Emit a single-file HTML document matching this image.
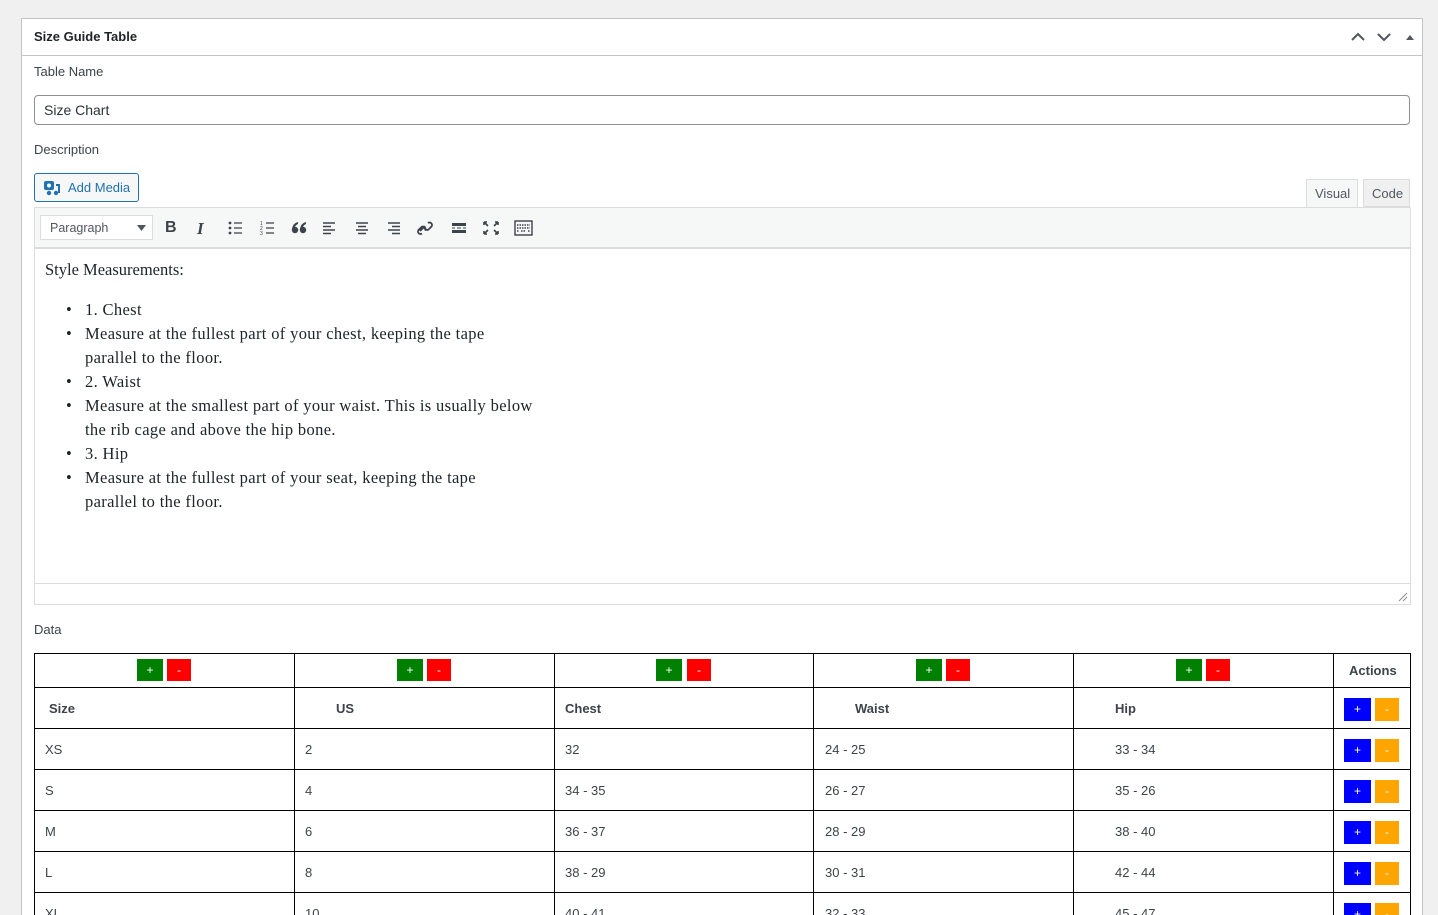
<!DOCTYPE html>
<html style="width:1438px;height:915px;overflow:hidden"><head><meta charset="utf-8"><style>
*{box-sizing:border-box;margin:0;padding:0}
body{width:1438px;height:915px;background:#f0f0f1;font-family:"Liberation Sans",sans-serif;font-size:13px;color:#1d2327;position:relative;overflow:hidden}
.a{position:absolute}
.panel{left:21px;top:18px;width:1402px;height:920px;background:#fff;border:1px solid #c3c4c7}
.t{position:absolute;color:#3c434a;font-size:13px;white-space:nowrap}
.b{position:absolute;width:26px;height:22px;color:#fff;font-size:12px;text-align:center;line-height:22px}
.g{background:#008000}.r{background:#ff0000}.bl{background:#0000ff}.o{background:#ffa500}
.hl{position:absolute;left:34px;width:1377px;height:1px;background:#000}
.vl{position:absolute;top:653px;width:1px;height:262px;background:#000}
.serif{font-family:"Liberation Serif",serif;font-size:16.5px;color:#1d2327;position:absolute;white-space:nowrap}
</style></head><body>
<div class="a panel"></div>
<div class="a" style="left:22px;top:55px;width:1400px;height:1px;background:#c3c4c7"></div>
<div class="t" style="left:34px;top:29px;font-weight:bold;color:#1d2327;font-size:13px">Size Guide Table</div>
<svg class="a" style="left:1349px;top:30px" width="70" height="14"><path d="M3 10 L9 4 L15 10" stroke="#50575e" stroke-width="2" fill="none"/><path d="M29 4 L35 10 L41 4" stroke="#50575e" stroke-width="2" fill="none"/><path d="M57 10 L61 5 L65 10Z" fill="#50575e"/></svg>
<div class="t" style="left:34px;top:64px">Table Name</div>
<div class="a" style="left:34px;top:95px;width:1376px;height:30px;border:1px solid #8c8f94;border-radius:4px"></div>
<div class="t" style="left:44px;top:102px;color:#2c3338;font-size:14px">Size Chart</div>
<div class="t" style="left:34px;top:142px">Description</div>
<div class="a" style="left:34px;top:173px;width:105px;height:29px;border:1px solid #2271b1;border-radius:3px;background:#f6f7f7"></div>
<svg class="a" style="left:43px;top:180px" width="18" height="16"><rect x="1" y="1" width="10" height="9" rx="2" fill="#2271b1"/><circle cx="6" cy="5.5" r="2" fill="#fff"/><path d="M13 5 h3 v8" stroke="#2271b1" stroke-width="2" fill="none"/><circle cx="13" cy="13" r="2.2" fill="#2271b1"/><circle cx="6" cy="13" r="2.2" fill="#2271b1"/></svg>
<div class="t" style="left:68px;top:180px;color:#2271b1">Add Media</div>
<div class="a" style="left:1306px;top:179px;width:52px;height:29px;background:#f6f7f7;border:1px solid #dcdcde;border-bottom:none"></div>
<div class="t" style="left:1315px;top:186px;color:#50575e">Visual</div>
<div class="a" style="left:1363px;top:179px;width:47px;height:28px;background:#f0f0f1;border:1px solid #dcdcde"></div>
<div class="t" style="left:1372px;top:186px;color:#50575e">Code</div>
<div class="a" style="left:34px;top:207px;width:1377px;height:398px;border:1px solid #dcdcde"></div>
<div class="a" style="left:35px;top:208px;width:1375px;height:41px;background:#f6f7f7;border-bottom:2px solid #dcdcde"></div>
<div class="a" style="left:40px;top:215px;width:113px;height:25px;background:#fff;border:1px solid #dcdcde"></div>
<div class="t" style="left:50px;top:221px;font-size:12.5px;color:#50575e">Paragraph</div>
<svg class="a" style="left:137px;top:225px" width="10" height="6"><path d="M0 0 L9 0 L4.5 6Z" fill="#50575e"/></svg>
<div class="t" style="left:165px;top:219px;font-weight:bold;font-size:16px;color:#3c434a">B</div>
<div class="t" style="left:197px;top:219px;font-style:italic;font-family:'Liberation Serif',serif;font-weight:bold;font-size:17px;color:#3c434a">I</div>
<svg class="a" style="left:226px;top:219px" width="320" height="18" fill="#3c434a" stroke="#3c434a">
<g stroke="none"><circle cx="4" cy="4" r="1.4"/><circle cx="4" cy="9" r="1.4"/><circle cx="4" cy="14" r="1.4"/></g>
<path d="M8 4h8M8 9h8M8 14h8" stroke-width="1.2"/>
<g stroke="none" font-size="5" font-family="Liberation Sans"><text x="34" y="6">1</text><text x="34" y="11">2</text><text x="34" y="16">3</text></g>
<path d="M40 4h8M40 9h8M40 14h8" stroke-width="1.2"/>
<g stroke="none"><circle cx="69" cy="11" r="3.2"/><circle cx="77" cy="11" r="3.2"/><path d="M66 10 q1-6 6-7 v2 q-3 1-3.5 5z M74 10 q1-6 6-7 v2 q-3 1-3.5 5z"/></g>
<path d="M97 4h12M97 7.5h8M97 11h12M97 14.5h8" stroke-width="1.6"/>
<path d="M130 4h12M132 7.5h8M130 11h12M132 14.5h8" stroke-width="1.6"/>
<path d="M162 4h12M166 7.5h8M162 11h12M166 14.5h8" stroke-width="1.6"/>
<path d="M194 12 l4-4 M196 14.5 a2.5 2.5 0 0 1 -3.5 -3.5 l3 -3 a2.5 2.5 0 0 1 3.5 3.5 M202 4 a2.5 2.5 0 0 1 3.5 3.5 l-3 3 a2.5 2.5 0 0 1 -3.5 -3.5" fill="none" stroke-width="1.8"/>
<path d="M226 4h14v3h-14z M226 11h14v3h-14z" stroke="none"/><path d="M226 9h3M231 9h4M237 9h3" stroke-width="1"/>
<path d="M258 3l4 4M258 3h3M258 3v3M272 3l-4 4M272 3h-3M272 3v3M258 15l4-4M258 15h3M258 15v-3M272 15l-4-4M272 15h-3M272 15v-3" stroke-width="1.6" fill="none"/>
<rect x="289" y="2" width="17" height="14" fill="none" stroke-width="1.4"/><path d="M291 6h13M291 9h13M291 12h2M295 12h5M302 12h2" stroke-width="1.4" stroke-dasharray="1.5 1"/>
</svg>
<div class="a" style="left:35px;top:583px;width:1375px;height:1px;background:#dcdcde"></div>
<svg class="a" style="left:1398px;top:592px" width="10" height="10"><path d="M9 1 L1 9 M9 5 L5 9" stroke="#8c8f94"/></svg>
<div class="serif" style="left:45px;top:260px">Style Measurements:</div>
<div class="serif" style="left:66px;top:298px;line-height:24px">•<br>•<br><br>•<br>•<br><br>•<br>•</div>
<div class="serif" style="left:85px;top:298px;line-height:24px;letter-spacing:0.35px">1. Chest<br>Measure at the fullest part of your chest, keeping the tape<br>parallel to the floor.<br>2. Waist<br>Measure at the smallest part of your waist. This is usually below<br>the rib cage and above the hip bone.<br>3. Hip<br>Measure at the fullest part of your seat, keeping the tape<br>parallel to the floor.</div>
<div class="t" style="left:34px;top:622px">Data</div>
<div class="hl" style="top:653px"></div><div class="hl" style="top:687px"></div><div class="hl" style="top:728px"></div><div class="hl" style="top:769px"></div><div class="hl" style="top:810px"></div><div class="hl" style="top:851px"></div><div class="hl" style="top:892px"></div>
<div class="vl" style="left:34px"></div><div class="vl" style="left:294px"></div><div class="vl" style="left:554px"></div><div class="vl" style="left:813px"></div><div class="vl" style="left:1073px"></div><div class="vl" style="left:1333px"></div><div class="vl" style="left:1410px"></div>
<div class="b g" style="left:137px;top:659px">+</div><div class="b r" style="left:167px;top:659px;width:24px">-</div>
<div class="b g" style="left:397px;top:659px">+</div><div class="b r" style="left:427px;top:659px;width:24px">-</div>
<div class="b g" style="left:656px;top:659px">+</div><div class="b r" style="left:687px;top:659px;width:24px">-</div>
<div class="b g" style="left:916px;top:659px">+</div><div class="b r" style="left:946px;top:659px;width:24px">-</div>
<div class="b g" style="left:1176px;top:659px">+</div><div class="b r" style="left:1206px;top:659px;width:24px">-</div>
<div class="t" style="left:1349px;top:663px;font-weight:bold">Actions</div>
<div class="t" style="left:49px;top:701px;font-weight:bold">Size</div><div class="t" style="left:336px;top:701px;font-weight:bold">US</div><div class="t" style="left:565px;top:701px;font-weight:bold">Chest</div><div class="t" style="left:855px;top:701px;font-weight:bold">Waist</div><div class="t" style="left:1115px;top:701px;font-weight:bold">Hip</div>
<div class="t" style="left:45px;top:742px">XS</div><div class="t" style="left:305px;top:742px">2</div><div class="t" style="left:565px;top:742px">32</div><div class="t" style="left:825px;top:742px">24 - 25</div><div class="t" style="left:1115px;top:742px">33 - 34</div>
<div class="t" style="left:45px;top:783px">S</div><div class="t" style="left:305px;top:783px">4</div><div class="t" style="left:565px;top:783px">34 - 35</div><div class="t" style="left:825px;top:783px">26 - 27</div><div class="t" style="left:1115px;top:783px">35 - 26</div>
<div class="t" style="left:45px;top:824px">M</div><div class="t" style="left:305px;top:824px">6</div><div class="t" style="left:565px;top:824px">36 - 37</div><div class="t" style="left:825px;top:824px">28 - 29</div><div class="t" style="left:1115px;top:824px">38 - 40</div>
<div class="t" style="left:45px;top:865px">L</div><div class="t" style="left:305px;top:865px">8</div><div class="t" style="left:565px;top:865px">38 - 29</div><div class="t" style="left:825px;top:865px">30 - 31</div><div class="t" style="left:1115px;top:865px">42 - 44</div>
<div class="t" style="left:45px;top:906px">XL</div><div class="t" style="left:305px;top:906px">10</div><div class="t" style="left:565px;top:906px">40 - 41</div><div class="t" style="left:825px;top:906px">32 - 33</div><div class="t" style="left:1115px;top:906px">45 - 47</div>
<div class="b bl" style="left:1344px;top:698px;width:27px;height:23px">+</div><div class="b o" style="left:1375px;top:698px;width:24px;height:23px">-</div>
<div class="b bl" style="left:1344px;top:739px;width:27px;height:23px">+</div><div class="b o" style="left:1375px;top:739px;width:24px;height:23px">-</div>
<div class="b bl" style="left:1344px;top:780px;width:27px;height:23px">+</div><div class="b o" style="left:1375px;top:780px;width:24px;height:23px">-</div>
<div class="b bl" style="left:1344px;top:821px;width:27px;height:23px">+</div><div class="b o" style="left:1375px;top:821px;width:24px;height:23px">-</div>
<div class="b bl" style="left:1344px;top:862px;width:27px;height:23px">+</div><div class="b o" style="left:1375px;top:862px;width:24px;height:23px">-</div>
<div class="b bl" style="left:1344px;top:903px;width:27px;height:23px">+</div><div class="b o" style="left:1375px;top:903px;width:24px;height:23px">-</div>
</body></html>
